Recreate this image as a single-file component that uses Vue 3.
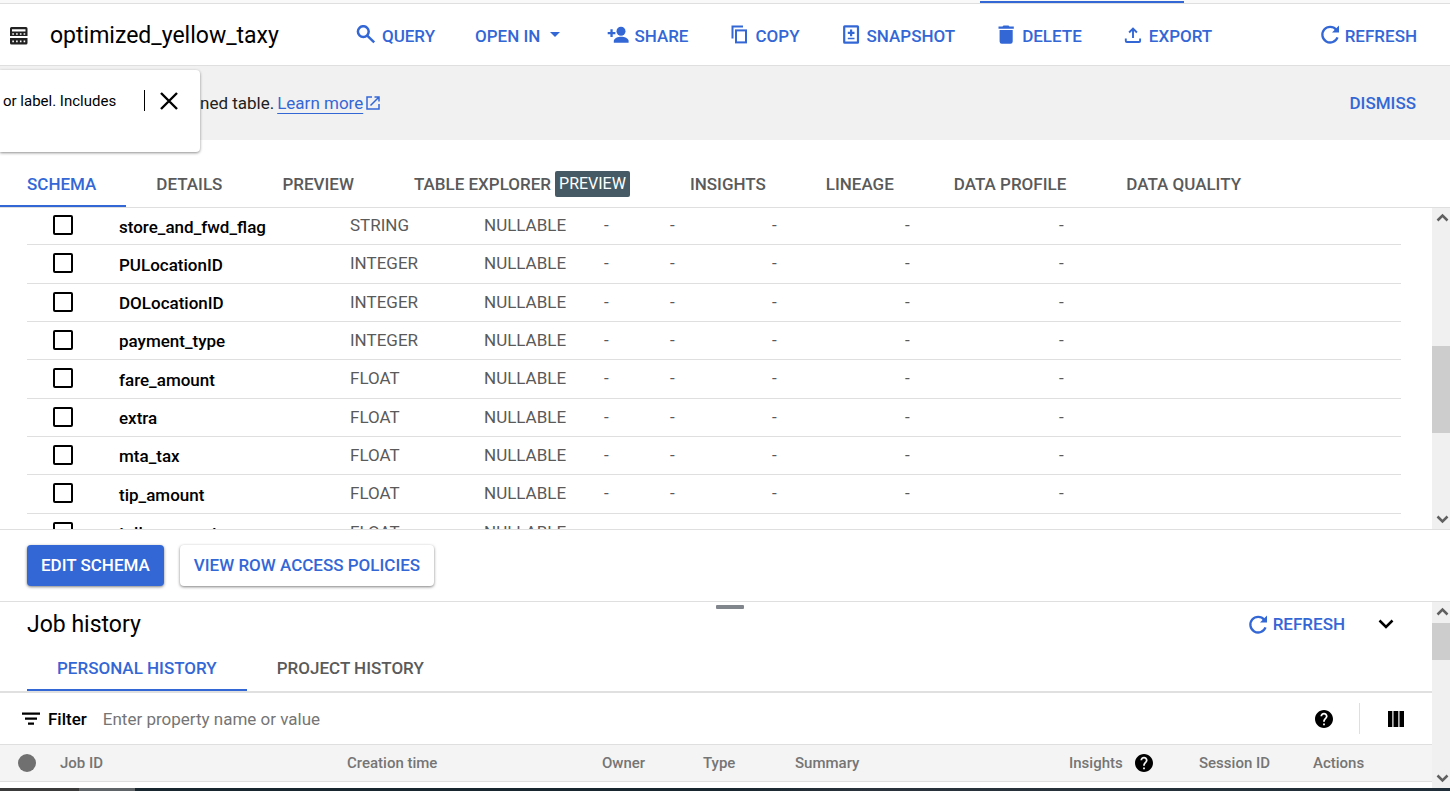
<script setup>
import { ref } from 'vue'

const tabs = ['SCHEMA', 'DETAILS', 'PREVIEW', 'TABLE EXPLORER', 'INSIGHTS', 'LINEAGE', 'DATA PROFILE', 'DATA QUALITY']
const activeTab = ref('SCHEMA')

const fields = [
  { name: 'store_and_fwd_flag', type: 'STRING' },
  { name: 'PULocationID', type: 'INTEGER' },
  { name: 'DOLocationID', type: 'INTEGER' },
  { name: 'payment_type', type: 'INTEGER' },
  { name: 'fare_amount', type: 'FLOAT' },
  { name: 'extra', type: 'FLOAT' },
  { name: 'mta_tax', type: 'FLOAT' },
  { name: 'tip_amount', type: 'FLOAT' },
  { name: 'tolls_amount', type: 'FLOAT' },
]

const historyTabs = ['PERSONAL HISTORY', 'PROJECT HISTORY']
const activeHistory = ref('PERSONAL HISTORY')
const filterText = ref('')

const schemaScroll = [120, 87, 78]
const jobScroll = [3, 37, 110]
</script>

<template>
  <div class="page">
    <div class="strip"><span class="strip-mark"></span></div>

    <header class="toolbar">
      <svg class="table-icon" viewBox="0 0 18 18" aria-hidden="true">
        <path fill="#212121" fill-rule="evenodd" d="M1.500 0h14.500a1.500 1.500 0 0 1 1.500 1.500V9H0V1.500A1.500 1.500 0 0 1 1.500 0zM2 2.200V4.500H15.500V2.200zM2.300 6.300v1.500h1.600V6.300zm3.800 0v1.500h1.600V6.300zm3.800 0v1.500h1.600V6.300zm3.700 0v1.500h1.600V6.300z" />
        <path fill="#212121" fill-rule="evenodd" d="M0 11H17.500v5a1.500 1.500 0 0 1-1.500 1.500H1.500A1.500 1.500 0 0 1 0 16zM2.300 13.600v1.600h1.600v-1.600zm3.800 0v1.600h1.600v-1.600zm3.800 0v1.600h1.600v-1.600zm3.700 0v1.600h1.600v-1.600z" />
      </svg>
      <h1>optimized_yellow_taxy</h1>
      <nav class="tools" aria-label="Table actions">
        <button type="button" class="tool">
          <svg viewBox="0 0 22 22" aria-hidden="true"><g fill="none" stroke="currentColor" stroke-width="2.500"><circle cx="8.300" cy="6.600" r="5.400" /><path d="M12 10.400L19.200 17.400" /></g></svg>
          QUERY
        </button>
        <button type="button" class="tool">
          OPEN IN
          <svg viewBox="0 0 22 22" aria-hidden="true"><path fill="currentColor" d="M5 7h10l-5 5z" /></svg>
        </button>
        <button type="button" class="tool">
          <svg viewBox="0 0 22 22" aria-hidden="true"><g fill="currentColor"><circle cx="14" cy="6.200" r="4.500" /><path d="M6.800 17.700v-1.800c0-2.700 4.300-4.200 7.400-4.200s7.400 1.500 7.400 4.200v1.800z" /><path d="M3.400 4.300h2.300V7h2.700v2.300H5.700V12H3.400V9.300H.7V7h2.700z" /></g></svg>
          SHARE
        </button>
        <button type="button" class="tool">
          <svg viewBox="0 0 22 22" aria-hidden="true"><g fill="none" stroke="currentColor" stroke-width="2"><path d="M4.500 13.500V1.500H15" /><rect x="8" y="5.400" width="10" height="12" /></g></svg>
          COPY
        </button>
        <button type="button" class="tool">
          <svg viewBox="0 0 22 22" aria-hidden="true"><rect x="4.200" y="1.300" width="13.800" height="16.400" rx=".5" fill="none" stroke="currentColor" stroke-width="2.200" /><path fill="currentColor" d="M10 4.500h2.200v2.300h2.300V9h-2.300v2.200H10V9H7.800V6.800H10zM7.800 12.800h6.700v1.500H7.800z" /></svg>
          SNAPSHOT
        </button>
        <button type="button" class="tool">
          <svg viewBox="0 0 22 22" aria-hidden="true"><path fill="currentColor" d="M8.500.500h5l1 1h4.300v2.300H3.500V1.500h4zM4.600 5h13.100v11.500a2.200 2.200 0 0 1-2.200 2.200H6.800a2.200 2.200 0 0 1-2.200-2.200z" /></svg>
          DELETE
        </button>
        <button type="button" class="tool">
          <svg viewBox="0 0 22 22" aria-hidden="true"><g fill="none" stroke="currentColor" stroke-width="1.900"><path d="M3.800 13.500v2.500q0 1 1 1h12.300q1 0 1-1v-2.500" /><path d="M11 13V4M7.100 7.500L11 3.600l3.900 3.900" /></g></svg>
          EXPORT
        </button>
        <button type="button" class="tool last">
          <svg viewBox="0 0 22 22" aria-hidden="true"><path fill="none" stroke="currentColor" stroke-width="2.300" d="M18.200 4.700A7.800 7.800 0 1 0 19.500 12.300" /><path fill="currentColor" d="M21 .6v7h-7z" /></svg>
          REFRESH
        </button>
      </nav>
    </header>

    <section class="banner">
      <p>ned table. <a href="#learn-more">Learn more</a>
        <svg viewBox="0 0 14 14" aria-hidden="true"><path fill="none" stroke="currentColor" stroke-width="1.500" d="M6 1H1v12h12V8M8.500 1H13v4.500M13 1L4.500 9.500" /></svg>
      </p>
      <button type="button" class="tool">DISMISS</button>
      <aside class="hint">
        <span>or label. Includes</span>
        <button type="button" aria-label="Close">
          <svg viewBox="0 0 18 18" aria-hidden="true"><path fill="none" stroke="#000" stroke-width="2.400" d="M1 1l16 16M17 1L1 17" /></svg>
        </button>
      </aside>
    </section>

    <div class="tabs main-tabs" role="tablist">
      <button v-for="t in tabs" :key="t" type="button" role="tab" :aria-selected="t === activeTab" :class="{ active: t === activeTab }" @click="activeTab = t">
        {{ t }}<span v-if="t === 'TABLE EXPLORER'" class="badge">PREVIEW</span>
      </button>
    </div>

    <main class="schema">
      <div class="schema-view">
        <table>
          <colgroup>
            <col class="c-check"><col class="c-name"><col class="c-type"><col class="c-mode"><col class="c-key"><col class="c-coll"><col class="c-default"><col class="c-policy"><col>
          </colgroup>
          <tbody>
            <tr v-for="f in fields" :key="f.name">
              <td class="check"><input type="checkbox" :aria-label="f.name"></td>
              <td class="name">{{ f.name }}</td>
              <td>{{ f.type }}</td>
              <td>NULLABLE</td>
              <td v-for="n in 5" :key="n">-</td>
            </tr>
          </tbody>
        </table>
      </div>
      <div class="scrollbar">
        <svg viewBox="0 0 18 18" aria-hidden="true"><path d="M5.500 12.500L10.500 7.500l5 5" /></svg>
        <i :style="{ flexGrow: schemaScroll[0] }"></i>
        <b :style="{ flexGrow: schemaScroll[1] }"></b>
        <i :style="{ flexGrow: schemaScroll[2] }"></i>
        <svg viewBox="0 0 18 18" aria-hidden="true"><path d="M5.500 5.500l5 5 5-5" /></svg>
      </div>
    </main>

    <div class="actions">
      <button type="button" class="primary">EDIT SCHEMA</button>
      <button type="button">VIEW ROW ACCESS POLICIES</button>
    </div>

    <section class="jobs">
      <div class="jobs-body">
        <span class="handle"></span>
        <div class="jobs-head">
          <h2>Job history</h2>
          <button type="button" class="tool">
            <svg viewBox="0 0 22 22" aria-hidden="true"><path fill="none" stroke="currentColor" stroke-width="2.300" d="M18.200 6.700A7.800 7.800 0 1 0 19.500 14.300" /><path fill="currentColor" d="M21 2.600v7h-7z" /></svg>
            REFRESH
          </button>
          <button type="button" class="icon-button" aria-label="Collapse">
            <svg viewBox="0 0 18 18" aria-hidden="true"><path fill="none" stroke="#000" stroke-width="2.500" d="M2.500 5.500L9 12l6.500-6.500" /></svg>
          </button>
        </div>
        <div class="tabs history-tabs" role="tablist">
          <button v-for="t in historyTabs" :key="t" type="button" role="tab" :aria-selected="t === activeHistory" :class="{ active: t === activeHistory }" @click="activeHistory = t">{{ t }}</button>
        </div>
        <div class="filter">
          <svg class="filter-icon" viewBox="0 0 18 14" aria-hidden="true"><path d="M0 .5h18v2.300H0zM3 5.500h12v2.300H3zM6 10.500h6v2.300H6z" /></svg>
          <label for="job-filter">Filter</label>
          <input id="job-filter" v-model="filterText" type="text" placeholder="Enter property name or value">
          <button type="button" class="icon-button" aria-label="Help">
            <svg viewBox="2 2 20 20" aria-hidden="true"><path d="M12 2C6.480 2 2 6.480 2 12s4.480 10 10 10 10-4.480 10-10S17.520 2 12 2zm1 17h-2v-2h2v2zm2.070-7.750l-.9.920C13.450 12.900 13 13.500 13 15h-2v-.5c0-1.100.450-2.100 1.170-2.830l1.240-1.260c.370-.360.590-.860.590-1.410 0-1.100-.9-2-2-2s-2 .9-2 2H8c0-2.210 1.790-4 4-4s4 1.790 4 4c0 .880-.360 1.680-.930 2.250z" /></svg>
          </button>
          <span class="divider"></span>
          <button type="button" class="icon-button" aria-label="Columns">
            <svg viewBox="0 0 18 18" aria-hidden="true"><path d="M1 1h4.300v16H1zM6.500 1h4.800v16H6.500zM12.500 1h4.500v16h-4.500z" /></svg>
          </button>
        </div>
        <table>
          <colgroup>
            <col class="j-dot"><col class="j-id"><col class="j-time"><col class="j-owner"><col class="j-type"><col class="j-summary"><col class="j-insights"><col class="j-session"><col>
          </colgroup>
          <thead>
            <tr>
              <th aria-label="Status"><span class="dot"></span></th>
              <th>Job ID</th>
              <th>Creation time</th>
              <th>Owner</th>
              <th>Type</th>
              <th>Summary</th>
              <th>
                <span class="with-help">Insights
                  <svg viewBox="2 2 20 20" aria-hidden="true"><path d="M12 2C6.480 2 2 6.480 2 12s4.480 10 10 10 10-4.480 10-10S17.520 2 12 2zm1 17h-2v-2h2v2zm2.070-7.750l-.9.920C13.450 12.900 13 13.500 13 15h-2v-.5c0-1.100.450-2.100 1.170-2.830l1.240-1.260c.370-.360.590-.860.590-1.410 0-1.100-.9-2-2-2s-2 .9-2 2H8c0-2.210 1.790-4 4-4s4 1.790 4 4c0 .880-.360 1.680-.930 2.250z" /></svg>
                </span>
              </th>
              <th>Session ID</th>
              <th>Actions</th>
            </tr>
          </thead>
        </table>
      </div>
      <div class="scrollbar">
        <svg viewBox="0 0 18 18" aria-hidden="true"><path d="M5.500 12.500L10.500 7.500l5 5" /></svg>
        <i :style="{ flexGrow: jobScroll[0] }"></i>
        <b :style="{ flexGrow: jobScroll[1] }"></b>
        <i :style="{ flexGrow: jobScroll[2] }"></i>
        <svg viewBox="0 0 18 18" aria-hidden="true"><path d="M5.500 5.500l5 5 5-5" /></svg>
      </div>
    </section>
    <footer class="edge"></footer>
  </div>
</template>

<style>
body {
  margin: 0;
  overflow: hidden;
}
</style>

<style scoped>
.page {
  display: flex;
  flex-direction: column;
  height: 100vh;
  background: #fff;
  color: #000;
  font: 400 17px/24px Roboto, "Liberation Sans", sans-serif;
}
.page * {
  box-sizing: border-box;
}
button {
  padding: 0;
  border: 0;
  background: none;
  color: #3367d6;
  font: inherit;
  font-weight: 500;
  white-space: nowrap;
  cursor: pointer;
}
svg {
  display: block;
  flex: none;
}
h1,
h2,
p {
  margin: 0;
}
h1,
h2 {
  font-size: 23px;
  line-height: 30px;
  font-weight: 400;
}
.strip {
  flex: none;
  display: flex;
  justify-content: flex-end;
  height: 4px;
  padding: 1px 266px 0 0;
  border-bottom: 1px solid #dfdfdf;
  background: #f9f9f9;
}
.strip-mark {
  width: 204px;
  height: 2px;
  background: #3367d6;
}
.toolbar {
  flex: none;
  display: flex;
  align-items: center;
  height: 62px;
  padding: 2px 33px 0 10px;
  border-bottom: 1px solid #dfdfdf;
}
.table-icon {
  width: 18px;
  height: 18px;
  margin-right: 22px;
}
.tools {
  flex: 1;
  display: flex;
  align-items: center;
  gap: 40px;
  margin-left: 76px;
}
.tool {
  display: flex;
  align-items: center;
  gap: 5px;
}
.tool svg {
  width: 22px;
  height: 22px;
}
.last {
  margin-left: auto;
}
.banner {
  flex: none;
  position: relative;
  display: flex;
  align-items: center;
  justify-content: space-between;
  height: 74px;
  padding: 0 34px 0 200px;
  background: #f1f1f1;
}
.banner p {
  display: flex;
  align-items: center;
  gap: 3px;
  color: #212121;
}
.banner p svg {
  width: 14px;
  height: 14px;
  color: #3367d6;
}
.banner a {
  color: #3367d6;
  text-decoration: underline;
  text-decoration-thickness: 1px;
  text-underline-offset: 4px;
}
.hint {
  position: absolute;
  top: 4px;
  left: 0;
  z-index: 1;
  display: flex;
  align-items: flex-start;
  width: 200px;
  height: 82px;
  padding: 20px 22px 0 3px;
  border-radius: 0 4px 4px 0;
  background: #fff;
  box-shadow: 0 1px 3px rgba(0, 0, 0, 0.45);
  font-size: 15px;
  line-height: 22px;
}
.hint button {
  display: flex;
  align-items: center;
  height: 21px;
  margin-left: auto;
  padding-left: 15px;
  border-left: 1px solid #000;
}
.hint svg {
  width: 18px;
  height: 18px;
}
.tabs {
  flex: none;
  display: flex;
}
.tabs button {
  display: flex;
  align-items: center;
  gap: 4px;
  padding: 0 30px;
  border-bottom: 2px solid transparent;
  color: #5a5a5a;
}
.tabs .active {
  border-bottom-color: #3367d6;
  color: #3367d6;
}
.main-tabs {
  height: 68px;
  padding-top: 22px;
  border-bottom: 1px solid #dfdfdf;
}
.main-tabs button:first-child {
  padding-left: 27px;
}
.badge {
  padding: 1px 4px;
  border-radius: 2px;
  background: #455a64;
  color: #fff;
  font-size: 16px;
  font-weight: 400;
}
.schema {
  flex: 1;
  display: flex;
  min-height: 0;
}
.schema-view {
  flex: 1;
  overflow: hidden;
  padding: 0 31px 0 27px;
}
table {
  width: 100%;
  border-spacing: 0;
  table-layout: fixed;
}
.c-check { width: 92px; }
.c-name { width: 231px; }
.c-type { width: 134px; }
.c-mode { width: 120px; }
.c-key { width: 66px; }
.c-coll { width: 102px; }
.c-default { width: 133px; }
.c-policy { width: 154px; }
td {
  height: 38px;
  padding: 0 0 2px;
  border-bottom: 1px solid #dfdfdf;
  color: #5a5a5a;
  line-height: 20px;
}
tr:first-child td {
  height: 37px;
}
tr:nth-child(3n + 2) td {
  height: 39px;
}
.check {
  padding-left: 26px;
}
.check input {
  display: block;
  appearance: none;
  width: 20px;
  height: 20px;
  margin: 0;
  border: 2px solid #000;
  border-radius: 2px;
}
td.name {
  padding: 1px 0 0;
  color: #000;
  font-weight: 500;
}
.scrollbar {
  flex: none;
  display: flex;
  flex-direction: column;
  width: 18px;
  background: #f0f0f0;
}
.scrollbar svg {
  width: 18px;
  height: 18px;
  fill: none;
  stroke: #606060;
  stroke-width: 2.500;
}
.scrollbar i,
.scrollbar b {
  flex-basis: 0;
}
.scrollbar b {
  background: #cdcdcd;
}
.actions {
  flex: none;
  display: flex;
  gap: 16px;
  padding: 15px 27px;
  border-top: 1px solid #dfdfdf;
  border-bottom: 1px solid #dfdfdf;
}
.actions button {
  height: 41px;
  padding: 0 14px 2px;
  border-radius: 4px;
  background: #fff;
  box-shadow: 0 1px 3px rgba(0, 0, 0, 0.5);
}
.actions .primary {
  background: #3367d6;
  color: #fff;
}
.jobs {
  flex: none;
  display: flex;
}
.jobs-body {
  position: relative;
  flex: 1;
  min-width: 0;
  padding-bottom: 6px;
}
.handle {
  position: absolute;
  top: 3px;
  left: 50%;
  width: 28px;
  height: 4px;
  border-radius: 1px;
  background: #80868b;
}
.jobs-head {
  display: flex;
  align-items: center;
  height: 44px;
  padding: 0 37px 0 27px;
}
.jobs-head h2 {
  padding-top: 2px;
}
.jobs-head .tool {
  margin-left: auto;
}
.jobs-head .icon-button {
  margin-left: 32px;
}
.icon-button svg {
  width: 18px;
  height: 18px;
}
.history-tabs {
  height: 47px;
  padding-left: 27px;
  border-bottom: 2px solid #e0e0e0;
}
.filter {
  display: flex;
  align-items: center;
  height: 51px;
  padding: 0 27px 0 22px;
}
.filter-icon {
  width: 18px;
  height: 14px;
}
.filter label {
  margin: 0 16px 0 8px;
  font-weight: 500;
}
.filter input {
  flex: 1;
  min-width: 0;
  padding: 0;
  border: 0;
  outline: 0;
  background: none;
  font: inherit;
}
.filter input::placeholder {
  color: #757575;
  opacity: 1;
}
.divider {
  width: 1px;
  height: 31px;
  margin: 0 27px 0 26px;
  background: #dfdfdf;
}
.j-dot { width: 60px; }
.j-id { width: 287px; }
.j-time { width: 255px; }
.j-owner { width: 101px; }
.j-type { width: 92px; }
.j-summary { width: 274px; }
.j-insights { width: 130px; }
.j-session { width: 114px; }
th {
  height: 38px;
  padding: 0;
  border-top: 1px solid #dfdfdf;
  border-bottom: 1px solid #dfdfdf;
  background: #f4f4f4;
  color: #757575;
  font-size: 15px;
  line-height: 20px;
  font-weight: 500;
  text-align: left;
}
.dot {
  display: block;
  width: 18px;
  height: 18px;
  margin-left: 18px;
  border-radius: 50%;
  background: #707070;
}
.with-help {
  display: flex;
  align-items: center;
  gap: 12px;
}
.with-help svg {
  width: 18px;
  height: 18px;
  fill: #000;
}
.edge {
  flex: none;
  height: 3px;
  background: linear-gradient(90deg, #3a3a3a 79px, #5f6468 79px, #5f6468 135px, #182630 135px, #182630 50%, #2a333b 60%, #1f2d38);
}
</style>
